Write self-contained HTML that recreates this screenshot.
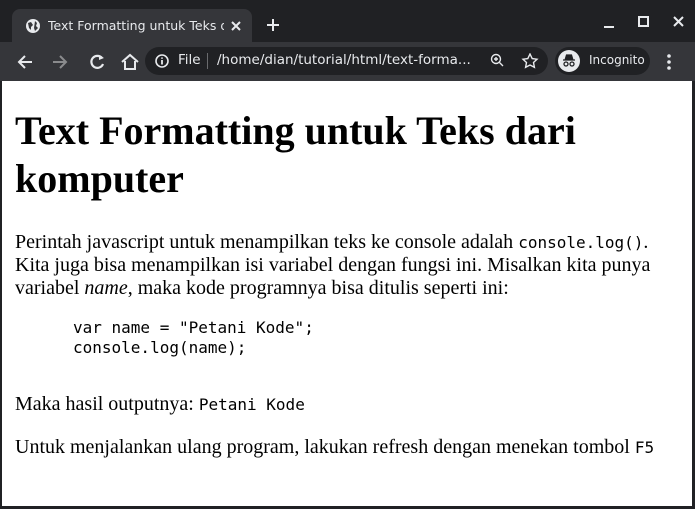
<!DOCTYPE html>
<html><head><meta charset="utf-8"><style>
*{margin:0;padding:0;box-sizing:border-box}
html,body{width:695px;height:509px;overflow:hidden;background:#202124;font-family:"Liberation Sans",sans-serif}
.tabbar{position:absolute;left:0;top:0;width:695px;height:42px;background:#202124}
.tab{position:absolute;left:12px;top:9px;width:240px;height:34px;background:#35363a;border-radius:8px 8px 0 0;color:#e8eaed;font-size:13px}
.tab .t{position:absolute;left:36px;top:9px;white-space:nowrap;width:176px;overflow:hidden;font-family:"DejaVu Sans",sans-serif;font-size:12.5px}
.toolbar{position:absolute;left:0;top:42px;width:695px;height:39px;background:#35363a}
.omni{position:absolute;left:145px;top:5px;width:403px;height:28px;border-radius:14px;background:#202124;color:#e8eaed;font-family:"DejaVu Sans",sans-serif;font-size:13.5px}
.inc{position:absolute;left:555px;top:5px;width:95px;height:28px;border-radius:14px;background:#202124;color:#e8eaed;font-family:"DejaVu Sans",sans-serif;font-size:12px}
.content{position:absolute;left:2px;top:81px;width:690px;height:425px;background:#fff;padding-left:13px;padding-right:22px;font-family:"Liberation Serif",serif;color:#000;font-size:20px;line-height:23px}
h1{font-size:40px;line-height:48px;margin-top:26px;margin-bottom:28px;font-weight:bold}
p{margin-bottom:20px}
code,pre{font-family:"DejaVu Sans Mono",monospace;font-size:16px}
pre{line-height:20px;margin:-2px 0 35px 58px}
svg{position:absolute}
</style></head><body>
<div class="tabbar">
 <div class="tab">
  <svg style="left:13px;top:9px" width="16" height="16" viewBox="0 0 16 16"><circle cx="8" cy="8" r="7" fill="#e8eaed"/><path d="M3 5 L6 4 L8 7 L6 9 L6 12 L4 10 Z M10 3 L12 5 L11 8 L13 10 L10 13 L9 10 Z" fill="#35363a"/></svg>
  <div class="t">Text Formatting untuk Teks d</div>
  <svg style="left:218px;top:11px" width="12" height="12"><path d="M2 2L10 10M10 2L2 10" stroke="#e8eaed" stroke-width="2"/></svg>
 </div>
 <svg style="left:266px;top:18px" width="14" height="14"><path d="M7 1V13M1 7H13" stroke="#e8eaed" stroke-width="2"/></svg>
 <svg style="left:604px;top:15px" width="80" height="14"><path d="M0 12H10" stroke="#e8eaed" stroke-width="2"/><rect x="35" y="2" width="9" height="9" fill="none" stroke="#e8eaed" stroke-width="2"/><path d="M70 2L79 11M79 2L70 11" stroke="#e8eaed" stroke-width="2"/></svg>
</div>
<div class="toolbar">
 <svg style="left:17px;top:11px" width="130" height="18"><path d="M15 9H3M8 3L2 9L8 15" stroke="#e8eaed" stroke-width="2" fill="none"/><path d="M36 9H48M43 3L49 9L43 15" stroke="#8a8b8d" stroke-width="2" fill="none"/><path d="M85 5A6 6 0 1 0 86 11" stroke="#e8eaed" stroke-width="2.2" fill="none"/><path d="M82 2L87 5L82 7Z" fill="#e8eaed"/><path d="M105 9L113 2L121 9M108 8V16H118V8" stroke="#e8eaed" stroke-width="2" fill="none"/></svg>
 <div class="omni">
  <svg style="left:10px;top:7px" width="14" height="14"><circle cx="7" cy="7" r="6" fill="none" stroke="#e8eaed" stroke-width="1.6"/><path d="M7 6V10.5M7 3.5V4.8" stroke="#e8eaed" stroke-width="1.8"/></svg>
  <span style="position:absolute;left:33px;top:5px">File</span>
  <span style="position:absolute;left:62px;top:6px;width:1px;height:16px;background:#6a6b6e"></span>
  <span style="position:absolute;left:72px;top:5px">/home/dian/tutorial/html/text-forma...</span>
  <svg style="left:345px;top:6px" width="60" height="16"><circle cx="6" cy="6" r="4.5" fill="none" stroke="#e8eaed" stroke-width="1.4"/><path d="M9.5 9.5L13 13M6 4V8M4 6H8" stroke="#e8eaed" stroke-width="1.4"/><path d="M40 1L42.2 5.6L47 6.2L43.5 9.5L44.4 14.3L40 12L35.6 14.3L36.5 9.5L33 6.2L37.8 5.6Z" fill="none" stroke="#e8eaed" stroke-width="1.4"/></svg>
 </div>
 <div class="inc">
  <svg style="left:3px;top:3px" width="22" height="22"><circle cx="11" cy="11" r="11" fill="#e8eaed"/><path d="M5 10H17M7 10L8.5 5H13.5L15 10" fill="#202124" stroke="#202124" stroke-width="1.2"/><circle cx="8" cy="14" r="2" fill="none" stroke="#202124" stroke-width="1.3"/><circle cx="14" cy="14" r="2" fill="none" stroke="#202124" stroke-width="1.3"/></svg>
  <span style="position:absolute;left:34px;top:6px">Incognito</span>
 </div>
 <svg style="left:667px;top:12px" width="4" height="16"><circle cx="2" cy="2" r="1.8" fill="#e8eaed"/><circle cx="2" cy="8" r="1.8" fill="#e8eaed"/><circle cx="2" cy="14" r="1.8" fill="#e8eaed"/></svg>
</div>
<div class="content">
<h1>Text Formatting untuk Teks dari komputer</h1>
<p>Perintah javascript untuk menampilkan teks ke console adalah <code>console.log()</code>. Kita juga bisa menampilkan isi variabel dengan fungsi ini. Misalkan kita punya variabel <i>name</i>, maka kode programnya bisa ditulis seperti ini:</p>
<pre>var name = "Petani Kode";
console.log(name);</pre>
<p>Maka hasil outputnya: <code>Petani Kode</code></p>
<p>Untuk menjalankan ulang program, lakukan refresh dengan menekan tombol <code>F5</code></p>
</div>
</body></html>
